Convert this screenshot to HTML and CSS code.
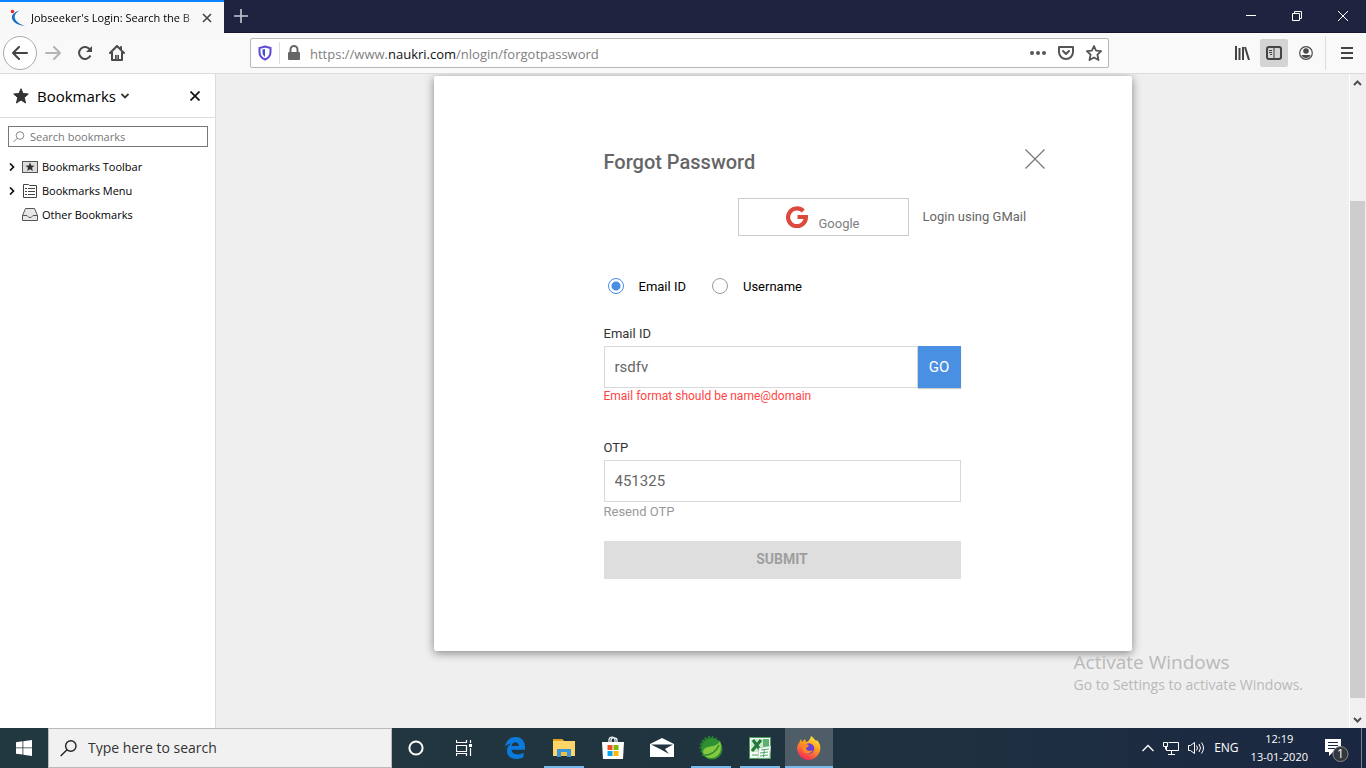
FILE: index.html
```html
<!DOCTYPE html>
<html lang="en">
<head>
<meta charset="utf-8">
<title>Jobseeker's Login: Search the Best Jobs</title>
<link rel="stylesheet" href="styles.css">
</head>
<body>
<header class="titlebar">
  <div class="tab">
    <svg width="16" height="18" viewBox="0 0 16 18"><path d="M11 1C3 4 1 12 15 17C6 16 1 12 2 7C3 4 7 2 11 1Z" fill="#1a6fc0"/><circle cx="2.5" cy="2.5" r="1.7" fill="#f02020"/></svg>
    <span class="tab-title">Jobseeker's Login: Search the B</span>
    <button class="plain tab-close" aria-label="Close tab"><svg width="10" height="10" viewBox="0 0 10 10" stroke="#444" stroke-width="1.6"><path d="M1 1l8 8M9 1l-8 8"/></svg></button>
  </div>
  <button class="plain new-tab" aria-label="New tab"><svg width="14" height="14" viewBox="0 0 14 14" stroke="#c8c8d0" stroke-width="1.6"><path d="M7 0v14M0 7h14"/></svg></button>
  <div class="window-controls">
    <button class="plain" aria-label="Minimize"><svg width="10" height="10" viewBox="0 0 10 10" stroke="#fff"><path d="M0 4.500h10"/></svg></button>
    <button class="plain" aria-label="Restore"><svg width="10" height="10" viewBox="0 0 10 10" fill="none" stroke="#fff"><path d="M.5 2.500h7v7h-7zM2.500 2.500v-2h7v7h-2"/></svg></button>
    <button class="plain" aria-label="Close"><svg width="10" height="10" viewBox="0 0 10 10" stroke="#fff"><path d="M0 0l10 10M10 0L0 10"/></svg></button>
  </div>
</header>

<nav class="toolbar">
  <button class="plain back" aria-label="Back"><svg width="16" height="14" viewBox="0 0 16 14" fill="none" stroke="#444" stroke-width="2" stroke-linecap="round" stroke-linejoin="round"><path d="M7 1L1 7l6 6M1 7h14"/></svg></button>
  <div class="tools">
    <button class="plain tool" aria-label="Forward"><svg width="16" height="14" viewBox="0 0 16 14" fill="none" stroke="#b5b5b5" stroke-width="2" stroke-linecap="round" stroke-linejoin="round"><path d="M9 1l6 6-6 6M15 7H1"/></svg></button>
    <button class="plain tool" aria-label="Reload"><svg width="16" height="16" viewBox="0 0 16 16" fill="none" stroke="#4a4a4a" stroke-width="2"><path d="M13 4.500A6 6 0 1 0 13.500 10.500"/><path d="M15 1v6H9z" fill="#4a4a4a" stroke="none"/></svg></button>
    <button class="plain tool" aria-label="Home"><svg width="16" height="16" viewBox="0 0 16 16" fill="none" stroke="#4a4a4a" stroke-width="2" stroke-linecap="round" stroke-linejoin="round"><path d="M1 8l7-7 7 7M3 7v8h10V7M12 2v3"/><path d="M6 15v-5h4v5z" fill="#4a4a4a" stroke="none"/><path d="M8 10v4" stroke="#bbb" stroke-width="1"/></svg></button>
  </div>
  <div class="address">
    <svg width="14" height="16" viewBox="0 0 14 16" fill="none"><path d="M7 1.500L12.500 3v4c0 4-2 6-5.500 7.500C3.500 13 1.500 11 1.500 7V3z" stroke="#6347d8" stroke-width="2"/><path d="M7 4v8C5 10.500 4.500 9 4.500 7V4.500z" fill="#3c53d0"/></svg>
    <span class="address-divider"></span>
    <svg width="14" height="16" viewBox="0 0 14 16"><path d="M3.500 8V4.500a3.500 3.500 0 0 1 7 0V8" fill="none" stroke="#666" stroke-width="2"/><rect x="1" y="7" width="12" height="8" rx="1" fill="#666"/></svg>
    <a class="url" href="#">https://www.<b>naukri.com</b>/nlogin/forgotpassword</a>
    <div class="address-actions">
      <svg width="16" height="16" viewBox="0 0 16 16" fill="#555"><circle cx="2" cy="8" r="2"/><circle cx="8" cy="8" r="2"/><circle cx="14" cy="8" r="2"/></svg>
      <svg width="16" height="16" viewBox="0 0 16 16" fill="none" stroke="#555" stroke-width="2" stroke-linecap="round" stroke-linejoin="round"><path d="M1 2h14v5a7 7 0 0 1-14 0z"/><path d="M5 6l3 3 3-3"/></svg>
      <svg width="16" height="16" viewBox="0 0 16 16" fill="none" stroke="#555" stroke-width="1.800" stroke-linejoin="round"><path d="M8 1l2.100 4.600 5 .5-3.700 3.600 1.100 5.300L8 12.500 3.500 15l1.100-5.300L.9 6.100l5-.5z"/></svg>
    </div>
  </div>
  <div class="tools">
    <button class="plain tool" aria-label="Library"><svg width="16" height="14" viewBox="0 0 16 14" fill="none" stroke="#444" stroke-width="2"><path d="M2 0v14M5.500 2v12M9 1v13M11 1l4 13"/></svg></button>
    <button class="plain tool pressed" aria-label="Sidebars"><svg width="16" height="14" viewBox="0 0 16 14" fill="none" stroke="#444"><rect x="1" y="1" width="14" height="12" rx="2" stroke-width="2"/><path d="M8 1v12M3 4.500h3M3 6.500h3M4 8.500h2"/></svg></button>
    <button class="plain tool" aria-label="Account"><svg width="14" height="14" viewBox="0 0 14 14"><circle cx="7" cy="7" r="6.300" fill="none" stroke="#4a4a4a" stroke-width="1.200"/><circle cx="7" cy="5" r="2.800" fill="#4a4a4a"/><path d="M2.500 9h9c-1 4-8 4-9 0z" fill="#4a4a4a"/></svg></button>
  </div>
  <span class="tool-divider"></span>
  <button class="plain tool" aria-label="Menu"><svg width="12" height="12" viewBox="0 0 12 12" stroke="#444" stroke-width="2"><path d="M0 1h12M0 6h12M0 11h12"/></svg></button>
</nav>

<div class="workspace">
  <aside class="sidebar">
    <div class="sidebar-head">
      <svg width="16" height="16" viewBox="0 0 16 16" fill="#333" stroke="#333" stroke-linejoin="round"><path d="M8 .7l2 4.800 5.300.5-4 3.500 1.200 5.500L8 12l-4.500 3 1.200-5.500L.7 6 6 5.500z"/></svg>
      <button class="plain sidebar-title">Bookmarks <svg width="8" height="6" viewBox="0 0 8 6" fill="none" stroke="#333" stroke-width="1.800"><path d="M.5 1L4 4.500 7.500 1"/></svg></button>
      <button class="plain sidebar-close" aria-label="Close sidebar"><svg width="10" height="10" viewBox="0 0 10 10" stroke="#111" stroke-width="1.700"><path d="M.5.5l9 9M9.500.5l-9 9"/></svg></button>
    </div>
    <label class="bookmark-search">
      <svg width="12" height="12" viewBox="0 0 12 12" fill="none" stroke="#888"><circle cx="7" cy="4.500" r="3.800"/><path d="M4.300 7.200L.5 11"/></svg>
      <input type="text" placeholder="Search bookmarks" aria-label="Search bookmarks">
    </label>
    <ul class="bookmarks">
      <li><svg class="twist" width="6" height="8" viewBox="0 0 6 8" fill="none" stroke="#111" stroke-width="1.700"><path d="M1 .5L4.500 4 1 7.500"/></svg><svg width="16" height="16" viewBox="0 0 16 16"><rect x=".5" y="2.500" width="15" height="11" fill="#ddd" stroke="#555"/><path d="M8 3.500l1.300 3 3.200.2-2.500 2 .9 3.300L8 10.200 5.100 12 6 8.700l-2.500-2 3.200-.2z" fill="#333"/></svg>Bookmarks Toolbar</li>
      <li><svg class="twist" width="6" height="8" viewBox="0 0 6 8" fill="none" stroke="#111" stroke-width="1.700"><path d="M1 .5L4.500 4 1 7.500"/></svg><svg width="16" height="16" viewBox="0 0 16 16" fill="none" stroke="#444"><path d="M1.500 14.500v-13h5l1 1h7v12z"/><path d="M6 5.500h7M6 8.500h7M6 11.500h7M3 5.500h2M3 8.500h2M3 11.500h2"/></svg>Bookmarks Menu</li>
      <li><span class="twist"></span><svg width="16" height="16" viewBox="0 0 16 16" fill="#e8e8e8" stroke="#555"><path d="M.5 8.500l3-7h9l3 7v5h-15z"/><path d="M.5 8.500H5l2 2h2l2-2h4.500" fill="none"/></svg>Other Bookmarks</li>
    </ul>
  </aside>

  <main class="page">
    <form class="dialog">
      <div class="dialog-head">
        <h1>Forgot Password</h1>
        <button type="button" class="plain" aria-label="Close"><svg width="20" height="20" viewBox="0 0 20 20" stroke="#777" stroke-width="1.200"><path d="M.5.500l19 19M19.500.500l-19 19"/></svg></button>
      </div>
      <div class="social">
        <button type="button" class="google"><svg width="22" height="22" viewBox="0 0 22 22" fill="none" stroke="#dc4a3d" stroke-width="4.200"><path d="M17.300 5A8.900 8.900 0 1 0 19.900 11H11.500"/></svg><span>Google</span></button>
        <span>Login using GMail</span>
      </div>
      <div class="choices">
        <label><input type="radio" name="by" checked><span>Email ID</span></label>
        <label><input type="radio" name="by"><span>Username</span></label>
      </div>
      <div class="field">
        <label for="email">Email ID</label>
        <div class="entry"><input id="email" type="text" value="rsdfv"><button type="button" class="go">GO</button></div>
        <p class="error">Email format should be name@domain</p>
      </div>
      <div class="field">
        <label for="otp">OTP</label>
        <div class="entry"><input id="otp" type="text" value="451325"></div>
        <a class="resend" href="#">Resend OTP</a>
      </div>
      <button type="submit" class="submit" disabled>SUBMIT</button>
    </form>
    <div class="watermark"><p class="watermark-title">Activate Windows</p><p>Go to Settings to activate Windows.</p></div>
  </main>

  <div class="scrollbar">
    <svg width="16" height="17" viewBox="0 0 16 17" fill="none" stroke="#505050" stroke-width="2"><path d="M4 11l3.500-3.500L11 11"/></svg>
    <div class="track"><span class="thumb"></span></div>
    <svg width="16" height="17" viewBox="0 0 16 17" fill="none" stroke="#505050" stroke-width="2"><path d="M4 7l3.500 3.500L11 7"/></svg>
  </div>
</div>

<footer class="taskbar">
  <button class="plain task" aria-label="Start"><svg width="16" height="16" viewBox="0 0 16 16" fill="#fff"><path d="M0 2.200l6.500-.9v6.200H0zM7.300 1.200L16 0v7.500H7.300zM0 8.300h6.500v6.300L0 13.700zM7.300 8.300H16V16l-8.700-1.200z"/></svg></button>
  <label class="task-search">
    <svg width="17" height="17" viewBox="0 0 17 17" fill="none" stroke="#222" stroke-width="1.400"><circle cx="10.800" cy="6" r="5.200"/><path d="M7 9.800L.7 16"/></svg>
    <input type="text" placeholder="Type here to search" aria-label="Type here to search">
  </label>
  <button class="plain task" aria-label="Cortana"><svg width="16" height="16" viewBox="0 0 16 16"><circle cx="8" cy="8" r="6.600" fill="none" stroke="#fff" stroke-width="2"/></svg></button>
  <button class="plain task" aria-label="Task view"><svg width="16" height="16" viewBox="0 0 16 16" fill="none" stroke="#fff"><path d="M.5 0v2.500h10V0M.5 5.500h10v6H.5zM.5 16v-2.500h10V16M14.500 0v3M14.500 8v8" stroke-width="1.200"/><path d="M13 4h3v3h-3z" fill="#fff" stroke="none"/></svg></button>
  <div class="apps">
    <button class="plain app" aria-label="Edge"><svg width="22" height="22" viewBox="0 0 22 22"><path d="M1 10C2 3.500 6 0 11.500 0 18 0 21 4.500 21 10v2.700H7.500c.3 5 7 6 12 3v4.500c-3 1.500-6 2-9 1.500C5 21 2.500 17.500 3 13c.3-3 2-5 4.500-6.500-2.500.4-5 1.500-6.500 3.500zM7.600 9h7.200c0-5-6.500-5-7.200 0z" fill="#0a7bdc"/></svg></button>
    <button class="plain app running" aria-label="File Explorer"><svg width="22" height="20" viewBox="0 0 22 20"><path d="M0 1h9l2 2h11v15H0z" fill="#ffd567"/><path d="M0 1h9l1 2H0z" fill="#e6a21c"/><path d="M4 19v-8h14v8h-4v-5H8v5z" fill="#3b95db"/><path d="M8 14h6v4H8z" fill="#f0bd45"/></svg></button>
    <button class="plain app" aria-label="Store"><svg width="24" height="24" viewBox="0 0 24 24"><path d="M8 7V4c0-4 6-4 6 0v3M10 7V4c0-3 6-3 6 0v3" fill="none" stroke="#fff" stroke-width="1.200"/><path d="M1 6h22l-1 17H2z" fill="#fff"/><path d="M6.500 9h5v5h-5z" fill="#f25022"/><path d="M12.500 9h5v5h-5z" fill="#7fba00"/><path d="M6.500 15h5v5h-5z" fill="#00a4ef"/><path d="M12.500 15h5v5h-5z" fill="#ffb900"/></svg></button>
    <button class="plain app" aria-label="Mail"><svg width="24" height="20" viewBox="0 0 24 20"><path d="M0 6L12 0l12 6v13H0z" fill="#fff"/><path d="M1 6.500h22L15 11l4 5L11 11.500z" fill="#21343f"/></svg></button>
    <button class="plain app running" aria-label="Spring Tool Suite"><svg width="26" height="26" viewBox="0 0 26 26"><circle cx="12.500" cy="12" r="9.500" fill="#247f2e" stroke="#247f2e" stroke-width="3" stroke-dasharray="2 1.500"/><circle cx="14" cy="14" r="10.500" fill="#2f8f33"/><path d="M5 17c1-8 13-3 17-11 2 6 1 12-3 15S6 24 5 17z" fill="#84c940"/><path d="M4 20c9 1 14-3 17-10" fill="none" stroke="#2b8a2e" stroke-width="1.500"/></svg></button>
    <button class="plain app running" aria-label="Excel"><svg width="22" height="22" viewBox="0 0 22 22"><rect x=".5" y=".5" width="21" height="21" fill="#f4faf4" stroke="#4c9c62"/><path d="M2 2h12v13H2z" fill="#cfe8cf"/><path d="M14 2h6v8h-6z" fill="#5fae72"/><path d="M4 3l8 11M12 3L3 14" stroke="#1e7b3a" stroke-width="3"/><path d="M10 11l12-2-2 12H9z" fill="#fff" stroke="#9ccaa6" stroke-width=".7"/><path d="M3 18h6M12 13l8-1M11 16l8-1M11 19l8-1M15.500 12l-1 8" stroke="#4aa565"/></svg></button>
    <button class="plain app running active" aria-label="Firefox"><svg width="24" height="24" viewBox="0 0 24 24"><defs><linearGradient id="fox" x1=".8" y1="0" x2=".3" y2="1"><stop offset="0" stop-color="#fff03e"/><stop offset=".45" stop-color="#ff981f"/><stop offset="1" stop-color="#f4225f"/></linearGradient></defs><path d="M2 7l2-4 1 3 3-3 1 3c2 0 2-1 4-3l1-3c3 2 4 4 5 5l1-1c3 3 4 7 3 11-2 6-7 9-12 9S0 19 0 12c0-2 1-4 2-5z" fill="url(#fox)"/><circle cx="12" cy="12.500" r="5.200" fill="#6842d8"/><path d="M7 8c2 0 4 0 5 2l-3 2c0 3 4 4 7 2-2 4-8 5-10 0-1-2-1-4 1-6z" fill="#ff8a24"/></svg></button>
  </div>
  <div class="tray">
    <svg width="12" height="8" viewBox="0 0 12 8" fill="none" stroke="#fff" stroke-width="1.300"><path d="M.5 7L6 1.500 11.500 7"/></svg>
    <svg width="16" height="14" viewBox="0 0 16 14" fill="none" stroke="#fff"><path d="M5.500 1.500h10v8h-12v-4M8.500 10v3M5 13.500h7M.5 1.500h4v4h-4zM2.500 5.500v3"/></svg>
    <svg width="17" height="14" viewBox="0 0 17 14" fill="none" stroke="#fff"><path d="M.5 4.500h2l4-3v11l-4-3h-2zM8.500 4.500q2 2.500 0 5M11 3q3 4 0 8M13.500 1.500q4 5.500 0 11"/></svg>
    <span>ENG</span>
    <div class="clock"><span>12:19</span><span>13-01-2020</span></div>
    <svg class="notices" width="24" height="24" viewBox="0 0 24 24"><path d="M0 1h16v13H8l-4 4v-4H0z" fill="#fff"/><path d="M3 4.500h10M3 7.500h10M3 10.500h7" stroke="#1b2a43"/><circle cx="15.500" cy="16" r="7.500" fill="#33383f" stroke="#888"/><text x="15.500" y="20" class="badge-count">1</text></svg>
  </div>
</footer>
</body>
</html>
```

FILE: styles.css
```css
* { box-sizing: border-box; }
body {
  margin: 0;
  height: 100vh;
  display: flex;
  flex-direction: column;
  overflow: hidden;
  font: 12px/16px "Open Sans", "Noto Sans", sans-serif;
  color: #000;
}
p, h1, ul { margin: 0; padding: 0; }
svg { flex: none; display: block; }
input { font: inherit; color: inherit; }
.plain {
  display: flex;
  align-items: center;
  justify-content: center;
  padding: 0;
  border: 0;
  background: none;
  font: inherit;
  color: inherit;
}

/* Window title bar */
.titlebar { display: flex; height: 33px; flex: none; background: #202340; border-bottom: 1px solid #15172e; }
.tab { display: flex; align-items: center; width: 224px; height: 33px; padding: 0 12px 0 10px; border-top: 2px solid #0a84ff; background: #f8f8f8; }
.tab-title {
  flex: 1;
  margin-left: 5px;
  white-space: nowrap;
  font-size: 11px;
  mask-image: linear-gradient(to right, #000 88%, transparent);
}
.new-tab { width: 34px; }
.window-controls { display: flex; margin-left: auto; }
.window-controls .plain { width: 46px; }

/* Navigation toolbar */
.toolbar { display: flex; align-items: center; height: 41px; flex: none; padding: 0 5px 0 3px; background: #f9f9f9; border-bottom: 1px solid #dcdcdc; }
.back { width: 34px; height: 34px; margin-right: 2px; border: 1px solid #aaa; border-radius: 50%; background: #fff; }
.tools { display: flex; gap: 4px; }
.tool { width: 28px; height: 28px; border-radius: 2px; }
.pressed { background: #d4d4d4; }
.tool-divider { width: 1px; height: 34px; margin: 0 7px 0 5px; background: #dcdcdc; }
.address { display: flex; align-items: center; flex: 1; height: 30px; margin: 0 119px; padding: 0 6px 0 7px; border: 1px solid #b8b8b8; border-radius: 2px; background: #fff; }
.address-divider { width: 1px; height: 22px; margin: 0 7px; background: #ddd; }
.url { margin-left: 9px; padding-top: 2px; font-size: 13px; color: #808080; text-decoration: none; }
.url b { font-weight: 400; color: #111; }
.address-actions { display: flex; gap: 12px; margin-left: auto; }

/* Bookmarks sidebar */
.workspace { display: flex; flex: 1; min-height: 0; }
.sidebar { width: 216px; flex: none; background: #fff; border-right: 1px solid #dcdcdc; }
.sidebar-head { display: flex; align-items: center; height: 44px; padding: 0 15px 0 13px; border-bottom: 1px solid #dcdcdc; }
.sidebar-title { gap: 5px; margin-left: 8px; font-size: 15px; }
.sidebar-close { margin-left: auto; }
.bookmark-search { display: flex; align-items: center; gap: 5px; height: 21px; margin: 8px 7px 8px 8px; padding: 0 4px; border: 1px solid #777; font-size: 11px; }
.bookmark-search input { flex: 1; min-width: 0; padding: 0; border: 0; outline: 0; }
input::placeholder { color: #777; }
.bookmarks { list-style: none; }
.bookmarks li { display: flex; align-items: center; gap: 4px; height: 24px; padding-left: 9px; font-size: 11px; }
.twist { width: 6px; margin-right: 3px; }

/* Web page */
.page { position: relative; flex: 1; min-width: 0; background: #efefef; overflow: hidden; font-family: Roboto, sans-serif; }
.dialog {
  width: 698px;
  max-width: 100%;
  margin: 2px auto 0;
  padding: 72px 171px 72px 170px;
  border-radius: 2px;
  background: #fff;
  box-shadow: 0 2px 10px rgba(0, 0, 0, .45);
  font-size: 13px;
}
.dialog-head { display: flex; align-items: center; justify-content: space-between; margin-right: -84px; height: 28px; }
.dialog-head .plain { height: 20px; margin-bottom: 6px; }
h1 { font-size: 20px; line-height: 28px; font-weight: 500; color: #666; }
.social { display: flex; align-items: center; gap: 14px; margin: 22px -84px 0 134px; color: #666; }
.google { display: flex; align-items: center; justify-content: center; gap: 10px; width: 171px; height: 38px; padding: 0; border: 1px solid #ccc; background: #fff; font: 13px/16px Roboto, sans-serif; color: #808080; }
.google span { padding-top: 14px; }
.choices { display: flex; gap: 26px; margin-top: 42px; padding-left: 4px; color: #000; }
.choices label { display: flex; align-items: center; gap: 15px; height: 16px; }
.choices span { padding-top: 2px; }
.choices input { appearance: none; width: 16px; height: 16px; margin: 0; border: 1px solid #999; border-radius: 50%; }
.choices input:checked { border-color: #4a90e2; background: radial-gradient(circle, #4a90e2 4px, transparent 5px); }
.field { height: 82px; margin-top: 32px; }
.field label { display: block; height: 20px; color: #333; }
.entry { display: flex; }
.entry input { flex: 1; min-width: 0; height: 42px; padding: 0 10px; border: 1px solid #d8d8d8; font-size: 15px; color: #666; outline: 0; }
.go { width: 43px; padding: 0; border: 0; background: #4a90e2; color: #fff; font: 15px Roboto, sans-serif; box-shadow: 0 1px 1px #ccc; }
.error { font-size: 12px; color: #f44; }
.resend { display: block; padding-top: 2px; color: #999; text-decoration: none; }
.submit { display: block; width: 100%; height: 38px; margin-top: 19px; padding: 0 0 2px; border: 0; background: #dedede; color: #9e9e9e; font: 700 14px Roboto, sans-serif; }
.watermark { position: absolute; right: 46px; bottom: 33px; font: 14px/20px "Open Sans", sans-serif; color: #b9b9b9; }
.watermark-title { font-size: 19px; line-height: 26px; }

.scrollbar { display: flex; flex-direction: column; width: 17px; flex: none; border-left: 1px solid #fff; background: #f0f0f0; }
.track { display: grid; grid-template-rows: 110fr 497fr 13fr; flex: 1; padding-right: 1px; }
.thumb { grid-row: 2; background: #cdcdcd; }

/* Taskbar */
.taskbar { display: flex; height: 40px; flex: none; background: linear-gradient(to right, #22383f, #20343f 55%, #1b2742); color: #fff; }
.task { width: 48px; }
.task-search { display: flex; align-items: center; gap: 11px; width: 344px; padding: 0 11px; border: 1px solid #bbb; background: #f1f1f1; color: #333; }
.task-search input { flex: 1; min-width: 0; padding: 0; border: 0; background: none; font-size: 14px; outline: 0; }
.task-search input::placeholder { color: #333; }
.apps { display: flex; margin-left: 2px; }
.app { width: 49px; padding-top: 2px; border-bottom: 2px solid transparent; }
.running { background: linear-gradient(#76b9ed, #76b9ed) bottom / 40px 2px no-repeat border-box; }
.active { width: 48px; margin-left: 1px; background: linear-gradient(#76b9ed, #76b9ed) bottom / 100% 2px no-repeat border-box #4e5d68; }
.tray { display: flex; align-items: center; gap: 9px; margin-left: auto; margin-right: 4px; padding-right: 12px; border-right: 1px solid #75808e; }
.clock { display: flex; flex-direction: column; align-items: center; gap: 2px; margin: 0 8px 0 3px; font-size: 11px; }
.notices { margin-top: 4px; }
.badge-count { font: 12px "Open Sans", sans-serif; fill: #fff; text-anchor: middle; }
```
